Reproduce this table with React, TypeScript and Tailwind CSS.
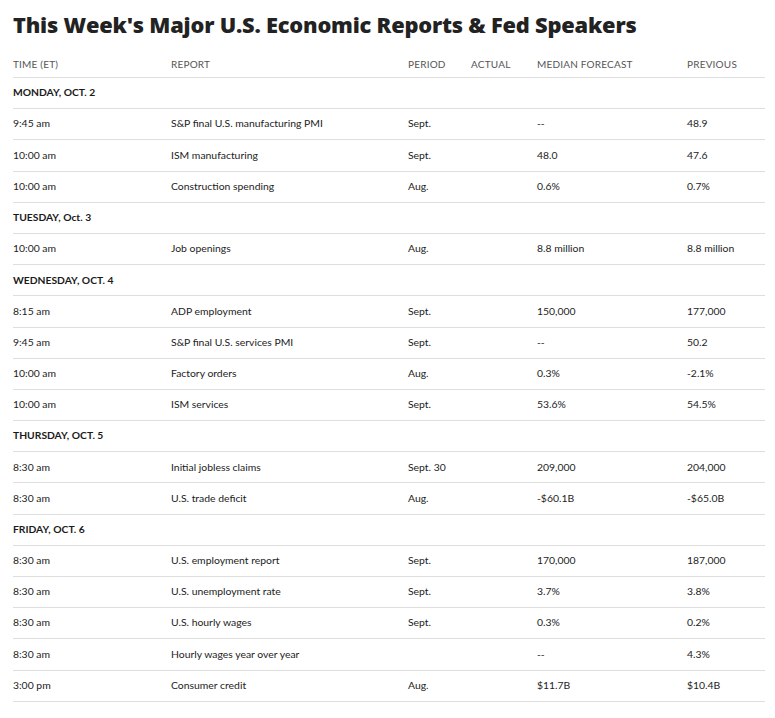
type Row = { time: string; report: string; period: string; actual?: string; forecast: string; previous: string };
type Day = { label: string; rows: Row[] };

const DAYS: Day[] = [
  {
    label: "MONDAY, OCT. 2",
    rows: [
      { time: "9:45 am", report: "S&P final U.S. manufacturing PMI", period: "Sept.", forecast: "--", previous: "48.9" },
      { time: "10:00 am", report: "ISM manufacturing", period: "Sept.", forecast: "48.0", previous: "47.6" },
      { time: "10:00 am", report: "Construction spending", period: "Aug.", forecast: "0.6%", previous: "0.7%" },
    ],
  },
  {
    label: "TUESDAY, Oct. 3",
    rows: [{ time: "10:00 am", report: "Job openings", period: "Aug.", forecast: "8.8 million", previous: "8.8 million" }],
  },
  {
    label: "WEDNESDAY, OCT. 4",
    rows: [
      { time: "8:15 am", report: "ADP employment", period: "Sept.", forecast: "150,000", previous: "177,000" },
      { time: "9:45 am", report: "S&P final U.S. services PMI", period: "Sept.", forecast: "--", previous: "50.2" },
      { time: "10:00 am", report: "Factory orders", period: "Aug.", forecast: "0.3%", previous: "-2.1%" },
      { time: "10:00 am", report: "ISM services", period: "Sept.", forecast: "53.6%", previous: "54.5%" },
    ],
  },
  {
    label: "THURSDAY, OCT. 5",
    rows: [
      { time: "8:30 am", report: "Initial jobless claims", period: "Sept. 30", forecast: "209,000", previous: "204,000" },
      { time: "8:30 am", report: "U.S. trade deficit", period: "Aug.", forecast: "-$60.1B", previous: "-$65.0B" },
    ],
  },
  {
    label: "FRIDAY, OCT. 6",
    rows: [
      { time: "8:30 am", report: "U.S. employment report", period: "Sept.", forecast: "170,000", previous: "187,000" },
      { time: "8:30 am", report: "U.S. unemployment rate", period: "Sept.", forecast: "3.7%", previous: "3.8%" },
      { time: "8:30 am", report: "U.S. hourly wages", period: "Sept.", forecast: "0.3%", previous: "0.2%" },
      { time: "8:30 am", report: "Hourly wages year over year", period: "", forecast: "--", previous: "4.3%" },
      { time: "3:00 pm", report: "Consumer credit", period: "Aug.", forecast: "$11.7B", previous: "$10.4B" },
    ],
  },
];

const COLS = "grid grid-cols-[158px_237px_63px_66px_150px_1fr] items-center";

export default function App() {
  return (
    <div className="min-h-[718px] w-[775px] bg-white px-[13px] pt-[10px] font-['Lato',sans-serif] text-[#222]">
      <h1 className="font-['Open_Sans',sans-serif] text-[21.8px] leading-[30px] font-extrabold tracking-[-0.2px] text-[#222]">
        This Week's Major U.S. Economic Reports &amp; Fed Speakers
      </h1>
      <div className="mt-[12px] w-[752px]">
        {/* Column headers */}
        <div className={`${COLS} h-[26px] border-b border-[#dedede] text-[10px] tracking-[0.2px] text-[#555]`}>
          <span>TIME (ET)</span>
          <span>REPORT</span>
          <span>PERIOD</span>
          <span>ACTUAL</span>
          <span>MEDIAN FORECAST</span>
          <span>PREVIOUS</span>
        </div>
        {DAYS.map((day) => (
          <div key={day.label}>
            <div className="flex h-[31.2px] items-center border-b border-[#dedede] text-[10.3px] font-bold text-[#1a1a1a]">
              {day.label}
            </div>
            {day.rows.map((row, i) => (
              <div key={i} className={`${COLS} h-[31.2px] border-b border-[#dedede] text-[10.4px] text-[#222]`}>
                <span>{row.time}</span>
                <span>{row.report}</span>
                <span>{row.period}</span>
                <span>{row.actual ?? ""}</span>
                <span>{row.forecast}</span>
                <span>{row.previous}</span>
              </div>
            ))}
          </div>
        ))}
      </div>
    </div>
  );
}
